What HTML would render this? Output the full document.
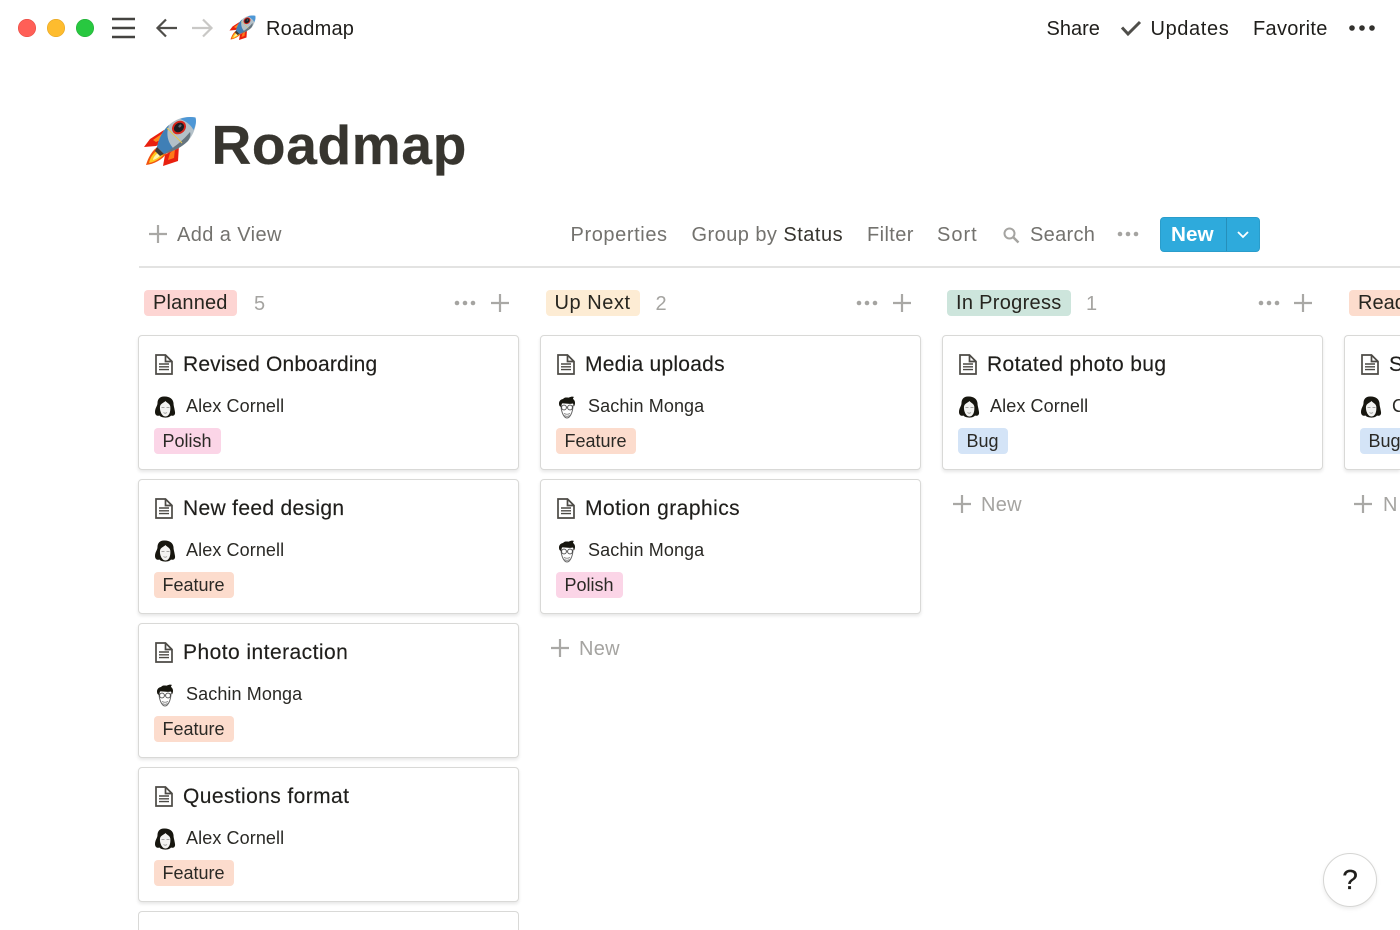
<!DOCTYPE html>
<html lang="en"><head><meta charset="utf-8"><title>Roadmap</title>
<style>
html,body{margin:0;padding:0;background:#fff;width:1400px;height:930px;overflow:hidden}
body{position:relative;font-family:"Liberation Sans",sans-serif;color:#1f1e1b}
#w{position:absolute;left:0;top:0;width:1400px;height:930px;overflow:hidden}
.t{position:absolute;white-space:nowrap;line-height:30px;height:30px;font-size:20px}
.g{color:#73726e}
.card{position:absolute;width:378.500px;height:133px;background:#fff;border:1px solid #d9d9d7;border-radius:4px;box-shadow:0 2px 3px rgba(15,15,15,.1)}
.card svg{position:absolute}
.card .doc{left:16px;top:18px}
.card .av{left:14.500px;top:59px}
.card .ti{position:absolute;left:44px;top:14px;font-size:21px;line-height:30px;letter-spacing:.33px;white-space:nowrap;color:#1f1e1b;-webkit-text-stroke:.15px #1f1e1b}
.card .nm{position:absolute;left:47px;top:55px;font-size:18px;line-height:30px;letter-spacing:.1px;white-space:nowrap;color:#2a2925}
.tag{position:absolute;left:14.500px;top:92px;height:26px;line-height:26px;padding:0 9px;font-size:18px;border-radius:4px;white-space:nowrap;color:#2a2925}
.pol{background:#fbd5e7}.fea{background:#fcdccd}.bug{background:#d4e4f7}
.hd{position:absolute;top:290px;height:26px;line-height:27px;padding:0 9px;font-size:20px;border-radius:4px;white-space:nowrap;color:#26251f}
.abs{position:absolute}
</style></head><body>
<div id="w">
<svg width="0" height="0" style="position:absolute">
<defs>
<symbol id="rocket" viewBox="0 0 54 54">
<path d="M21 14 L7 23 L1 31 L13 30 L21 26Z" fill="#e9200f"/>
<path d="M20 17 L10 24 L13 26 L21 22Z" fill="#ff8a1c"/>
<path d="M36 29 L35 45 L20 50 L22 39Z" fill="#e9200f"/>
<path d="M32 33 L31 42 L25 44 L27 37Z" fill="#ff7a18"/>
<path d="M16 30 C9 34 5 42 3 49 C11 48 19 44 24 37Z" fill="#f2540f"/>
<path d="M16 33 C10 37 7 42 6 47 C12 46 18 42 21 38Z" fill="#ffc91f"/>
<path d="M15 37 C12 39 10 42 10 44 C13 43 15 42 18 39Z" fill="#fff4b0"/>
<path d="M52.500 1.500 C43 0 34 2 26 9 C20 14 16 22 14 31 L21 38 C31 35 39 31 45 25 C51 18 54 9 52.500 1.500Z" fill="#b3c0c8"/>
<path d="M14 31 C16 22 20 14 26 9 C23 17 24 26 31 33 L21 38Z" fill="#3f7fb6"/>
<path d="M52.500 1.500 C47 .5 42 1 37 3 C43 5 48 9 50.500 14 C53 9 53.500 5 52.500 1.500Z" fill="#4d97d6"/>
<path d="M45 25 C39 31 31 35 21 38 C29 32 37 28 47 16 C48 19 47 22 45 25Z" fill="#66757f"/>
<path d="M14 31 L21 38 L17 40 L12 35Z" fill="#3d3a38"/>
<path d="M24 12 L39 27" stroke="#e7c84e" stroke-width="1" fill="none"/>
<ellipse cx="36" cy="11.500" rx="7.500" ry="6.200" transform="rotate(-40 36 11.500)" fill="#d8251b"/>
<ellipse cx="36" cy="11.500" rx="5.500" ry="4.400" transform="rotate(-40 36 11.500)" fill="#1c1c22"/>
<ellipse cx="37" cy="10" rx="1.800" ry="1.200" transform="rotate(-40 37 10)" fill="#5b6470"/>
</symbol>
<symbol id="doc" viewBox="0 0 18 21">
<path d="M1 1 H10.500 L17 7.500 V20 H1Z M10.500 1 V7.500 H17" fill="none" stroke="#4c4a45" stroke-width="1.700"/>
<path d="M4 10H14M4 12.800H14M4 15.600H14" stroke="#4c4a45" stroke-width="1.400"/>
</symbol>
<symbol id="alex" viewBox="0 0 22 24">
<path d="M11 1.500 C6 1 3.500 4 3.500 8 C3.500 11 1 13 1 17 C1 20 3 21.500 5.500 20.500 C7 23 15 23.500 17 20.500 C19.500 21.500 21.500 20 21 17 C20.500 13 19.500 11 19.500 8 C19 4 15.500 1.500 11 1.500Z" fill="#17160f"/>
<path d="M11.500 6 C9.500 8 6.500 8.500 6 11.500 C5.500 16 8 21.500 11.500 21.500 C15 21.500 16.800 17 16.300 11.500 C15.800 8.500 13 8 11.500 6Z" fill="#f3f3f1"/>
<path d="M7.500 12.500h3M12.500 12.500h3M9.500 17.500c1 .8 2.500 .8 3.500 0" stroke="#8a8a88" stroke-width=".8" fill="none"/>
</symbol>
<symbol id="sachin" viewBox="0 0 22 24">
<path d="M5 10 C5 17 8 23 11 23 C14 23 17 17 17 10" fill="#fff" stroke="#666" stroke-width="1"/>
<path d="M3.500 11 C2 7 4 4.500 7 4 C9 1.500 12 3 13 2.500 C15 1.500 17 1.500 18 2 C17 3 17 3.500 17 4 C19.500 5.500 19.500 9 18 11.500 L17 8.500 C13 9.500 9 8 6 8.500 L5 12Z" fill="#17160f"/>
<circle cx="8" cy="12.500" r="2.400" fill="#fff" stroke="#444" stroke-width=".9"/>
<circle cx="14" cy="12.500" r="2.400" fill="#fff" stroke="#444" stroke-width=".9"/>
<path d="M8 18.500c2 1 4 1 6 0M8.500 20.500c1.500 1 3.500 1 5 0" stroke="#777" stroke-width=".8" fill="none"/>
</symbol>
<symbol id="dots" viewBox="0 0 22 6"><circle cx="3" cy="3" r="2.300" fill="#a5a4a1"/><circle cx="11" cy="3" r="2.300" fill="#a5a4a1"/><circle cx="19" cy="3" r="2.300" fill="#a5a4a1"/></symbol>
<symbol id="plus" viewBox="0 0 20 20"><path d="M10 1V19M1 10H19" stroke="#a9a8a5" stroke-width="2.200"/></symbol>
</defs>
</svg>

<!-- top bar -->
<svg class="abs" style="left:0;top:0" width="240" height="56">
<circle cx="27" cy="28" r="8.700" fill="#ff5f57" stroke="#e8483f" stroke-width=".6"/>
<circle cx="56" cy="28" r="8.700" fill="#febc2e" stroke="#e6a41f" stroke-width=".6"/>
<circle cx="85" cy="28" r="8.700" fill="#28c840" stroke="#20ad35" stroke-width=".6"/>
<path d="M112 19H135M112 28H135M112 37H135" stroke="#444340" stroke-width="2.500"/>
<path d="M177 28H158M166 19.500L157.500 28L166 36.500" fill="none" stroke="#4f4e4a" stroke-width="2.200"/>
<path d="M192 28H211M203 19.500L211.500 28L203 36.500" fill="none" stroke="#c9c8c6" stroke-width="2.200"/>
</svg>
<svg class="abs" style="left:229px;top:15px" width="27" height="27"><use href="#rocket"/></svg>
<div class="t" style="left:266px;top:13.500px;letter-spacing:.2px">Roadmap</div>
<div class="t" style="left:1046.500px;top:13.500px">Share</div>
<svg class="abs" style="left:1120px;top:19px" width="22" height="18"><path d="M2 8.500L8 15L20 3" fill="none" stroke="#4f4e4a" stroke-width="3"/></svg>
<div class="t" style="left:1150.500px;top:13.500px;letter-spacing:.62px">Updates</div>
<div class="t" style="left:1253px;top:13.500px;letter-spacing:.3px">Favorite</div>
<svg class="abs" style="left:1348px;top:23px" width="28" height="10"><circle cx="4" cy="5" r="2.800" fill="#33322e"/><circle cx="14" cy="5" r="2.800" fill="#33322e"/><circle cx="24" cy="5" r="2.800" fill="#33322e"/></svg>

<!-- title -->
<svg class="abs" style="left:143px;top:116px" width="54" height="54"><use href="#rocket"/></svg>
<div class="abs" style="left:211.500px;top:110px;font-size:55px;line-height:70px;font-weight:700;color:#37352f;letter-spacing:.7px;white-space:nowrap;-webkit-text-stroke:.3px #37352f">Roadmap</div>

<!-- toolbar -->
<svg class="abs" style="left:148px;top:224px" width="20" height="20"><use href="#plus"/></svg>
<div class="t g" style="left:177px;top:220px;letter-spacing:.4px">Add a View</div>
<div class="t g" style="left:570.500px;top:220px;letter-spacing:.6px">Properties</div>
<div class="t g" style="left:691.500px;top:220px;letter-spacing:.45px">Group by <span style="color:#37352f;letter-spacing:.5px">Status</span></div>
<div class="t g" style="left:867px;top:220px;letter-spacing:.4px">Filter</div>
<div class="t g" style="left:937px;top:220px;letter-spacing:1px">Sort</div>
<svg class="abs" style="left:1002px;top:226px" width="18" height="18"><circle cx="7.500" cy="7.500" r="5" fill="none" stroke="#a5a4a1" stroke-width="2"/><path d="M11 11L16.500 16.500" stroke="#a5a4a1" stroke-width="2.400"/></svg>
<div class="t g" style="left:1030px;top:220px;letter-spacing:.3px">Search</div>
<svg class="abs" style="left:1117px;top:231px" width="22" height="6"><use href="#dots"/></svg>
<div class="abs" style="left:1160px;top:217px;width:100px;height:35px;box-sizing:border-box;background:#2eaadc;border:1px solid #2a9dcb;border-radius:4px"></div>
<div class="abs" style="left:1226px;top:218px;width:1px;height:33px;background:#268fba"></div>
<div class="abs" style="left:1171px;top:219px;font-size:20.700px;line-height:31px;font-weight:700;color:#fff">New</div>
<svg class="abs" style="left:1236px;top:230px" width="14" height="10"><path d="M2 2L7 7L12 2" fill="none" stroke="#fff" stroke-width="1.800"/></svg>
<div class="abs" style="left:139px;top:266px;width:1261px;height:2px;background:#e3e3e2"></div>

<!-- Planned -->
<div class="hd" style="left:144px;background:#fdd5d3;letter-spacing:.17px">Planned</div>
<div class="t" style="left:254px;top:289px;color:#a5a4a1">5</div>
<svg class="abs" style="left:454px;top:300px" width="22" height="6"><use href="#dots"/></svg>
<svg class="abs" style="left:490px;top:293px" width="20" height="20"><use href="#plus"/></svg>

<div class="card" style="left:138px;top:335px"><svg class="doc" width="18" height="21"><use href="#doc"/></svg><div class="ti" style="letter-spacing:.16px">Revised Onboarding</div><svg class="av" width="22" height="24"><use href="#alex"/></svg><div class="nm">Alex Cornell</div><div class="tag pol">Polish</div></div>
<div class="card" style="left:138px;top:479px"><svg class="doc" width="18" height="21"><use href="#doc"/></svg><div class="ti">New feed design</div><svg class="av" width="22" height="24"><use href="#alex"/></svg><div class="nm">Alex Cornell</div><div class="tag fea">Feature</div></div>
<div class="card" style="left:138px;top:623px"><svg class="doc" width="18" height="21"><use href="#doc"/></svg><div class="ti" style="letter-spacing:.45px">Photo interaction</div><svg class="av" width="22" height="24"><use href="#sachin"/></svg><div class="nm">Sachin Monga</div><div class="tag fea">Feature</div></div>
<div class="card" style="left:138px;top:767px"><svg class="doc" width="18" height="21"><use href="#doc"/></svg><div class="ti" style="letter-spacing:.4px">Questions format</div><svg class="av" width="22" height="24"><use href="#alex"/></svg><div class="nm">Alex Cornell</div><div class="tag fea">Feature</div></div>
<div class="card" style="left:138px;top:911px;height:18px;border-bottom:none;border-radius:4px 4px 0 0;box-shadow:none"></div>

<!-- Up Next -->
<div class="hd" style="left:545.500px;background:#fdecd4;letter-spacing:.55px">Up Next</div>
<div class="t" style="left:655.500px;top:289px;color:#a5a4a1">2</div>
<svg class="abs" style="left:856px;top:300px" width="22" height="6"><use href="#dots"/></svg>
<svg class="abs" style="left:892px;top:293px" width="20" height="20"><use href="#plus"/></svg>

<div class="card" style="left:540px;top:335px"><svg class="doc" width="18" height="21"><use href="#doc"/></svg><div class="ti" style="letter-spacing:.25px">Media uploads</div><svg class="av" width="22" height="24"><use href="#sachin"/></svg><div class="nm">Sachin Monga</div><div class="tag fea">Feature</div></div>
<div class="card" style="left:540px;top:479px"><svg class="doc" width="18" height="21"><use href="#doc"/></svg><div class="ti" style="letter-spacing:.46px">Motion graphics</div><svg class="av" width="22" height="24"><use href="#sachin"/></svg><div class="nm">Sachin Monga</div><div class="tag pol">Polish</div></div>
<svg class="abs" style="left:550px;top:638px" width="20" height="20"><use href="#plus"/></svg>
<div class="t" style="left:579px;top:634px;color:#a5a4a1;letter-spacing:.3px">New</div>

<!-- In Progress -->
<div class="hd" style="left:947px;background:#cde5dc;letter-spacing:.3px">In Progress</div>
<div class="t" style="left:1086px;top:289px;color:#a5a4a1">1</div>
<svg class="abs" style="left:1258px;top:300px" width="22" height="6"><use href="#dots"/></svg>
<svg class="abs" style="left:1293px;top:293px" width="20" height="20"><use href="#plus"/></svg>

<div class="card" style="left:942px;top:335px"><svg class="doc" width="18" height="21"><use href="#doc"/></svg><div class="ti" style="letter-spacing:.39px">Rotated photo bug</div><svg class="av" width="22" height="24"><use href="#alex"/></svg><div class="nm">Alex Cornell</div><div class="tag bug">Bug</div></div>
<svg class="abs" style="left:952px;top:494px" width="20" height="20"><use href="#plus"/></svg>
<div class="t" style="left:981px;top:490px;color:#a5a4a1;letter-spacing:.3px">New</div>

<!-- Ready (clipped by the frame edge) -->
<div class="hd" style="left:1349px;width:51px;box-sizing:border-box;overflow:hidden;padding-right:0;border-radius:4px 0 0 4px;background:#fcdccd">Read</div>
<div class="card" style="left:1344px;top:335px;width:55px;overflow:hidden;border-right:none;border-radius:4px 0 0 4px"><svg class="doc" width="18" height="21"><use href="#doc"/></svg><div class="ti">S</div><svg class="av" width="22" height="24"><use href="#alex"/></svg><div class="nm">C</div><div class="tag bug" style="right:0;padding-right:0;border-radius:4px 0 0 4px">Bug</div></div>
<svg class="abs" style="left:1353px;top:494px" width="20" height="20"><use href="#plus"/></svg>
<div class="t" style="left:1383px;top:490px;width:17px;overflow:hidden;color:#a5a4a1">N</div>

<!-- help -->
<div class="abs" style="left:1323px;top:853px;width:54px;height:54px;box-sizing:border-box;border:1px solid #d6d6d4;border-radius:50%;background:#fff;box-shadow:0 2px 4px rgba(15,15,15,.08);text-align:center;line-height:52px;font-size:28px;color:#1f1e1b;-webkit-text-stroke:.3px #1f1e1b">?</div>
</div>
</body></html>
